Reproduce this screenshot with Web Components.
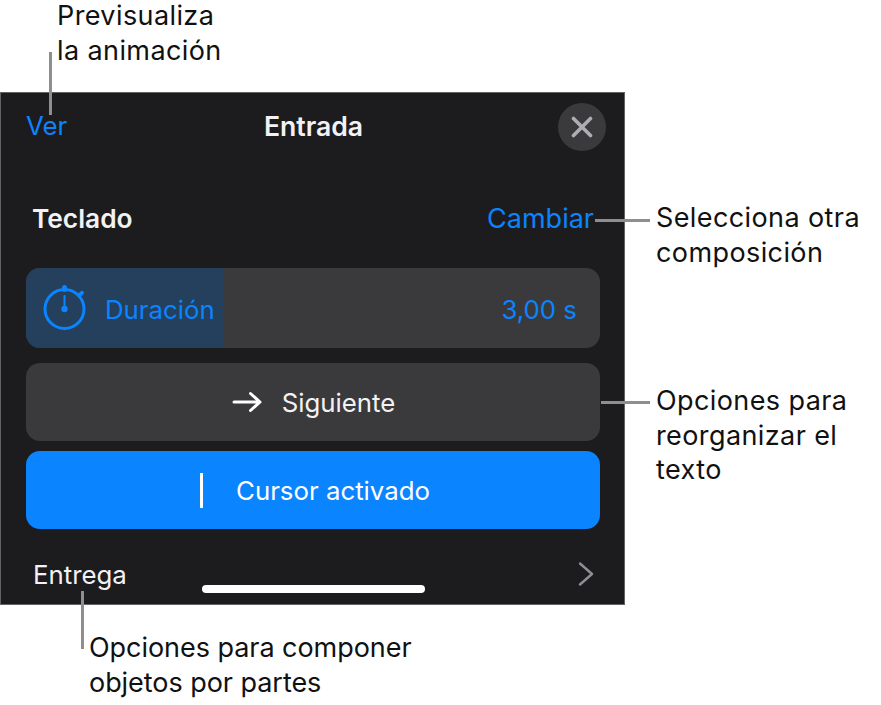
<!DOCTYPE html>
<html lang="es">
<head>
<meta charset="utf-8">
<title>Entrada</title>
<style>
  html, body { margin: 0; background: #fff; }
  body { font-family: Inter, "Liberation Sans", sans-serif; }
</style>
</head>
<body>
<anim-figure></anim-figure>

<script>
const STYLE_FONT = `font-family: Inter, "Liberation Sans", sans-serif;`;

// annotation text next to the panel
customElements.define("call-out", class CallOut extends HTMLElement {
  constructor(){
    super();
    this.attachShadow({ mode: "open" });
    this.shadowRoot.innerHTML = `
      <style>
        :host {
          display: block;
          ${STYLE_FONT}
          font-size: 27px;
          letter-spacing: 0.4px;
          line-height: 34.5px;
          color: #111;
          white-space: nowrap;
        }
      </style>
      <slot></slot>`;
  }
});

// rounded row inside the panel
customElements.define("panel-row", class PanelRow extends HTMLElement {
  constructor(){
    super();
    this.attachShadow({ mode: "open" });
    this.shadowRoot.innerHTML = `
      <style>
        :host {
          display: flex;
          align-items: center;
          justify-content: center;
          box-sizing: border-box;
          height: 78px;
          border-radius: 14px;
          background: #3a3a3c;
          color: #f2f2f4;
          font-size: 25.8px;
          overflow: hidden;
        }
        :host([tint]) { background: #0a84ff; color: #fff; }
      </style>
      <slot></slot>`;
  }
});

// duration row with its progress fill
customElements.define("duration-row", class DurationRow extends HTMLElement {
  constructor(){
    super();
    this.attachShadow({ mode: "open" });
    this.shadowRoot.innerHTML = `
      <style>
        :host {
          display: flex;
          align-items: center;
          box-sizing: border-box;
          height: 80px;
          border-radius: 14px;
          background: #3a3a3c;
          color: #0a84ff;
          font-size: 25.8px;
          overflow: hidden;
        }
        .fill {
          display: flex;
          align-items: center;
          gap: 19px;
          box-sizing: border-box;
          width: 197px;
          height: 100%;
          padding-left: 17px;
          background: #25405c;
        }
        .value { margin-left: auto; padding-right: 23px; }
        span { position: relative; top: 1px; }
        svg { display: block; }
      </style>
      <div class="fill">
        <svg width="43" height="46" viewBox="0 0 43 46" fill="none" stroke="#0a84ff" stroke-width="3" stroke-linecap="round">
          <circle cx="21.5" cy="24" r="19.5"/>
          <path d="M21.5 4.5V2.5" stroke-width="5"/>
          <path d="M36 10.5l3-2.7" stroke-width="4"/>
          <path d="M21.5 11v13" stroke-width="2"/>
          <circle cx="21.5" cy="24" r="3.2" fill="#0a84ff" stroke="none"/>
        </svg>
        <span><slot name="label"></slot></span>
      </div>
      <div class="value"><span><slot name="value"></slot></span></div>`;
  }
});

// dark popover with all its rows
customElements.define("entrada-panel", class EntradaPanel extends HTMLElement {
  constructor(){
    super();
    this.attachShadow({ mode: "open" });
    this.shadowRoot.innerHTML = `
      <style>
        :host {
          display: block;
          position: relative;
          flex: none;
          box-sizing: border-box;
          width: 625px;
          height: 513px;
          background: #1c1c1e;
          border: 1px solid #636366;
          ${STYLE_FONT}
          font-size: 25.8px;
          color: #f2f2f4;
        }
        .head {
          display: grid;
          grid-template-columns: 1fr auto 1fr;
          align-items: center;
          height: 48px;
          padding: 10px 18px 0 18px;
        }
        .blue { color: #0a84ff; }
        .ver { margin: -4px 0 0 7px; }
        .title { font-weight: 600; font-size: 26.6px; margin: -3px 0 0 2px; }
        .close {
          justify-self: end;
          display: flex;
          align-items: center;
          justify-content: center;
          width: 48px;
          height: 48px;
          border-radius: 50%;
          background: #3a3a3c;
        }
        .layout {
          display: flex;
          justify-content: space-between;
          align-items: center;
          height: 34px;
          margin-top: 50px;
          padding: 0 30px 0 31px;
        }
        .layout b { font-weight: 600; font-size: 26.3px; }
        .layout .blue { font-size: 27px; }
        .rows {
          display: flex;
          flex-direction: column;
          margin: 33px 24px 0 25px;
        }
        .gap-a { height: 15px; }
        .gap-b { height: 10px; }
        .arrow { margin: 0 20px 0 1px; display: block; }
        .caret { width: 3px; height: 35px; background: #fff; margin: 0 33px 0 4px; }
        .foot {
          display: flex;
          justify-content: space-between;
          align-items: center;
          height: 34px;
          margin-top: 28px;
          padding: 0 30px 0 32px;
        }
        .home {
          position: absolute;
          left: 201px;
          bottom: 11px;
          width: 223px;
          height: 8px;
          border-radius: 4px;
          background: #fff;
        }
      </style>
      <div class="head">
        <span class="blue ver">Ver</span>
        <span class="title">Entrada</span>
        <span class="close">
          <svg width="22" height="22" viewBox="0 0 22 22" fill="none" stroke="#aeaeb2" stroke-width="3.6" stroke-linecap="round"><path d="M2.5 2.5l17 17M19.5 2.5l-17 17"/></svg>
        </span>
      </div>
      <div class="layout">
        <b>Teclado</b>
        <span class="blue">Cambiar</span>
      </div>
      <div class="rows">
        <duration-row>
          <span slot="label">Duración</span>
          <span slot="value">3,00 s</span>
        </duration-row>
        <div class="gap-a"></div>
        <panel-row>
          <svg class="arrow" width="30" height="22" viewBox="0 0 30 22" fill="none" stroke="#fff" stroke-width="3" stroke-linecap="round" stroke-linejoin="round"><path d="M2 11h26M18.5 2.5L28 11l-9.5 8.5"/></svg>
          <span>Siguiente</span>
        </panel-row>
        <div class="gap-b"></div>
        <panel-row tint>
          <span class="caret"></span>
          <span>Cursor activado</span>
        </panel-row>
      </div>
      <div class="foot">
        <span>Entrega</span>
        <svg width="16" height="24" viewBox="0 0 16 24" fill="none" stroke="#8e8e93" stroke-width="2.4" stroke-linecap="round" stroke-linejoin="round"><path d="M2 1.5L14 12 2 22.5"/></svg>
      </div>
      <div class="home"></div>`;
  }
});

// whole picture: panel, callouts and the leader lines over them
customElements.define("anim-figure", class AnimFigure extends HTMLElement {
  constructor(){
    super();
    this.attachShadow({ mode: "open" });
    this.shadowRoot.innerHTML = `
      <style>
        :host {
          display: block;
          position: relative;
          width: 881px;
          height: 705px;
          overflow: hidden;
          background: #fff;
        }
        .top { margin-top: -1px; padding-left: 57px; height: 93px; box-sizing: border-box; }
        .middle { display: flex; }
        .side { padding-left: 31px; }
        .side call-out:first-child { margin-top: 109px; }
        .side call-out:last-child { margin-top: 114px; }
        .bottom { padding: 26px 0 0 89px; }
        .bottom call-out { letter-spacing: -0.05px; }
        .line { position: absolute; background: #8e8e90; }
      </style>
      <div class="top"><call-out>Previsualiza<br>la animación</call-out></div>
      <div class="middle">
        <entrada-panel></entrada-panel>
        <div class="side">
          <call-out>Selecciona otra<br>composición</call-out>
          <call-out>Opciones para<br>reorganizar el<br>texto</call-out>
        </div>
      </div>
      <div class="bottom"><call-out>Opciones para componer<br>objetos por partes</call-out></div>
      <div class="line" style="left:49px;top:52px;width:3px;height:63px"></div>
      <div class="line" style="left:595px;top:219px;width:55px;height:3px"></div>
      <div class="line" style="left:601px;top:401px;width:49px;height:3px"></div>
      <div class="line" style="left:81px;top:591px;width:3px;height:58px"></div>`;
  }
});
</script>
</body>
</html>
